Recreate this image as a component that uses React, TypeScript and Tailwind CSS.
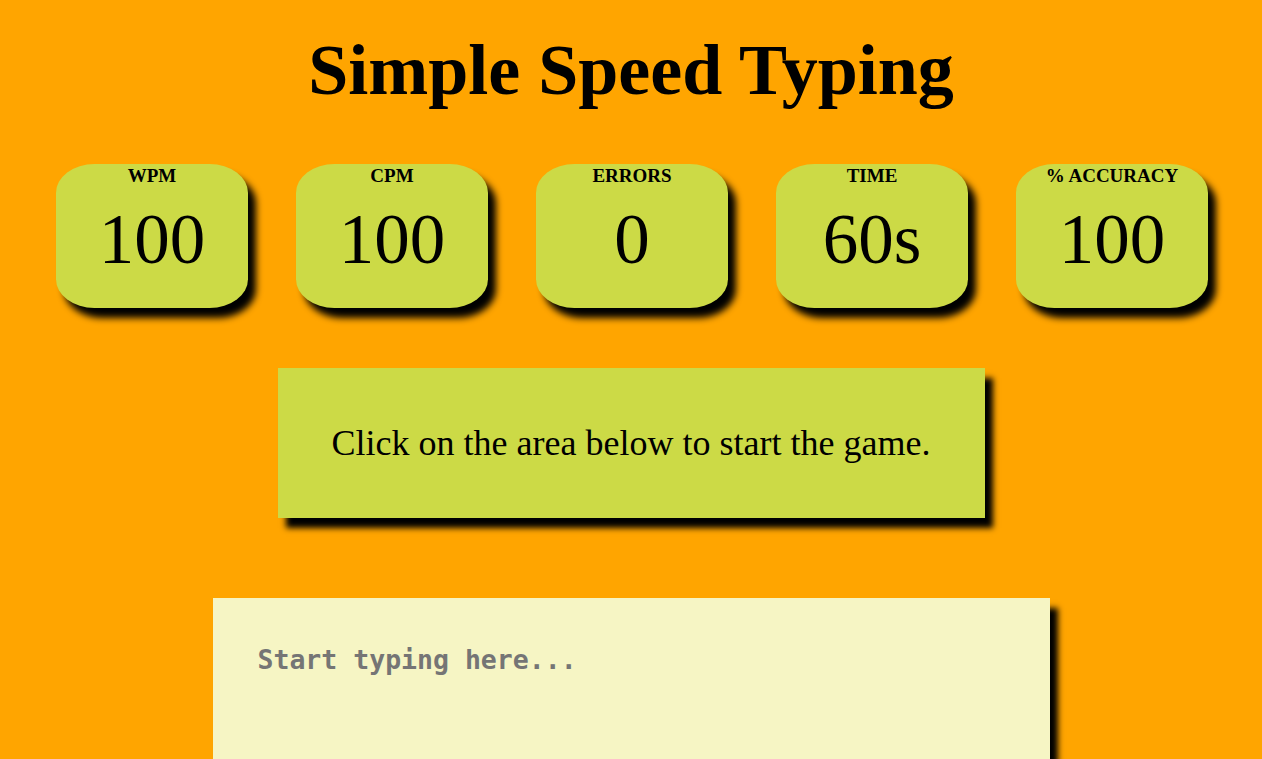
const stats = [
  { label: "WPM", value: "100" },
  { label: "CPM", value: "100" },
  { label: "Errors", value: "0" },
  { label: "Time", value: "60s" },
  { label: "% Accuracy", value: "100" },
];

export default function App() {
  return (
    <div className="min-h-screen bg-[#ffa500] text-black text-center font-['Liberation_Serif',serif] overflow-hidden">
      <div className="flex flex-col items-center">
        <h1 className="mt-[28px] text-[72px] leading-[84px] font-bold">Simple Speed Typing</h1>

        <div className="mt-[52px] flex gap-[48px] pl-[2px]">
          {stats.map((s) => (
            <div
              key={s.label}
              className="w-[192px] h-[144px] rounded-[20%] bg-[#ccda46] shadow-[8px_10px_7px_black] flex flex-col items-center"
            >
              <div className="mt-[1px] text-[19px] leading-[22px] font-bold uppercase">{s.label}</div>
              <div className="mt-[10px] text-[71px] leading-[84px]">{s.value}</div>
            </div>
          ))}
        </div>

        <div className="mt-[60px] w-[707px] h-[150px] bg-[#ccda46] shadow-[8px_10px_6px_black] flex items-center justify-center">
          <span className="text-[36px]">Click on the area below to start the game.</span>
        </div>

        <textarea
          placeholder="Start typing here..."
          className="mt-[80px] w-[837px] h-[200px] bg-[#f6f5c4] shadow-[8px_10px_6px_black] resize-none outline-none px-[45px] pt-[44px] pb-[40px] text-[26.5px] leading-[36px] font-bold font-['DejaVu_Sans_Mono',monospace] placeholder:text-[#757575]"
        />
      </div>
    </div>
  );
}
